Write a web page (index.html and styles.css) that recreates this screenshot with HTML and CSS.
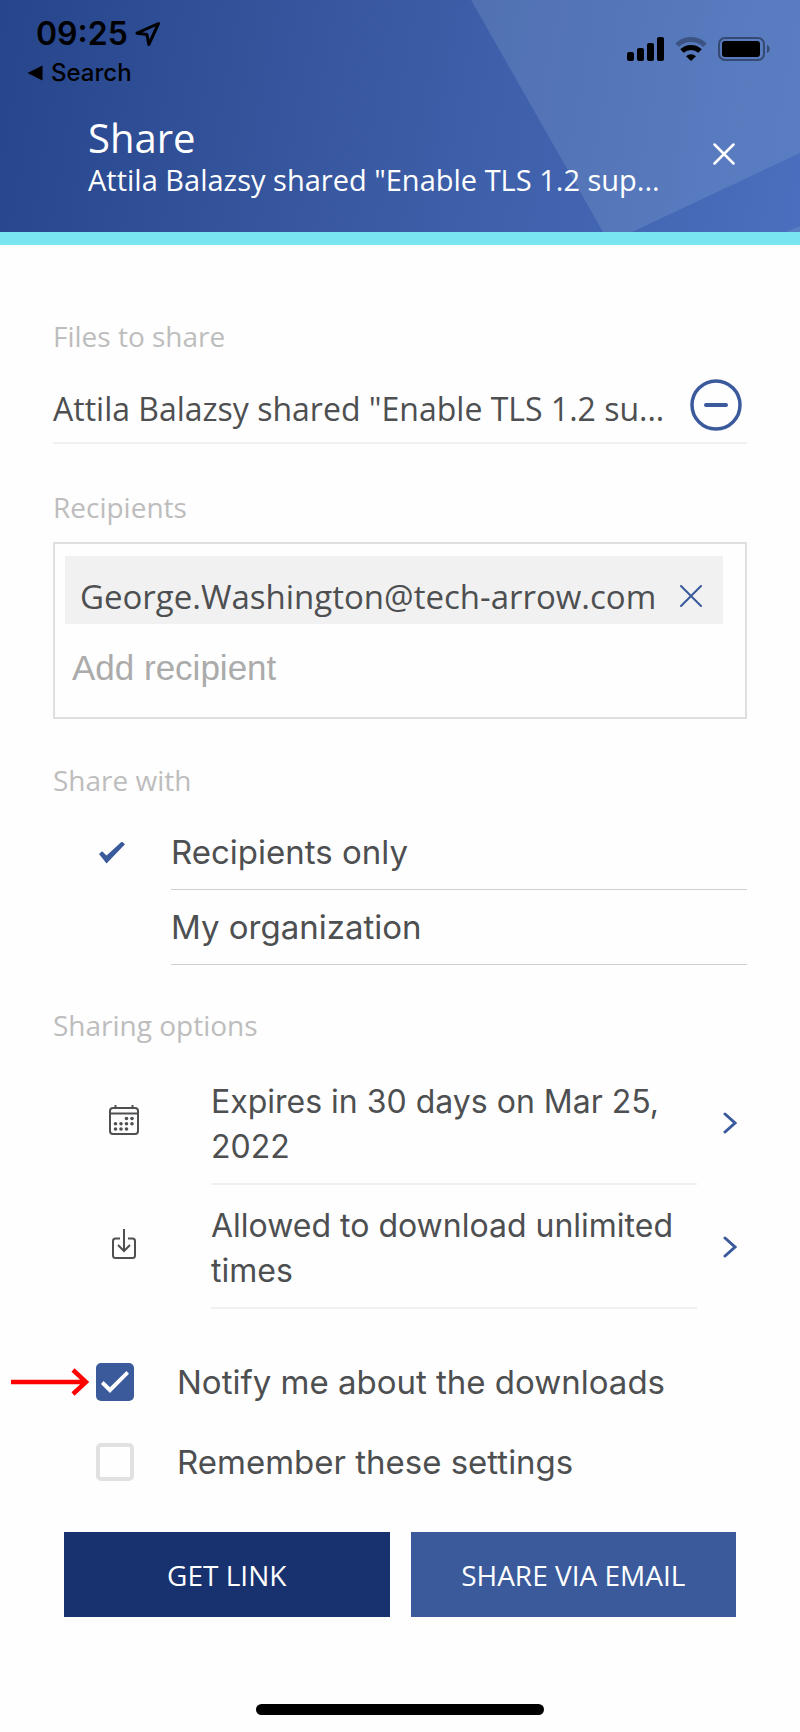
FILE: index.html
```html
<!DOCTYPE html>
<html lang="en">
<head>
  <meta charset="UTF-8">
  <meta name="viewport" content="width=device-width, initial-scale=1">
  <title>Share</title>
  <link rel="stylesheet" href="styles.css">
</head>
<body>
  <header>
    <svg class="header-bg" viewBox="0 0 800 232" preserveAspectRatio="none" aria-hidden="true">
      <path d="M471 0H800V153L632 232H603Z M786 232L800 226V232Z"/>
    </svg>

    <!-- Phone status bar -->
    <div class="status-bar">
      <div class="status-left">
        <div class="time">
          <span>09:25</span>
          <svg width="26" height="26" viewBox="0 0 26 26" aria-hidden="true">
            <path d="M23.5 2.5L2 12.2L12 13.6L13.8 23.5Z" fill="none" stroke="#000" stroke-width="3" stroke-linejoin="round"/>
          </svg>
        </div>
        <a href="#" class="back-link">
          <svg width="16" height="16" viewBox="0 0 16 16" aria-hidden="true"><path d="M0.5 8L15.5 0.5V15.5Z"/></svg>
          Search
        </a>
      </div>
      <div class="status-icons">
        <svg width="37" height="24" viewBox="0 0 37 24" aria-hidden="true">
          <rect x="0" y="15" width="7" height="9" rx="2"/>
          <rect x="10" y="11" width="7" height="13" rx="2"/>
          <rect x="20" y="6" width="7" height="18" rx="2"/>
          <rect x="30" y="0" width="7" height="24" rx="2"/>
        </svg>
        <svg width="32" height="24" viewBox="0 0 32 24" aria-hidden="true">
          <path d="M2 8.2A20 20 0 0 1 30 8.2" fill="none" stroke="#000" stroke-opacity=".3" stroke-width="5"/>
          <path d="M7 14A13 13 0 0 1 25 14" fill="none" stroke="#000" stroke-width="5"/>
          <path d="M11 19.2A7.5 7.5 0 0 1 21 19.2L16 24Z"/>
        </svg>
        <svg width="52" height="24" viewBox="0 0 52 24" aria-hidden="true">
          <rect x="1" y="1" width="45" height="22" rx="6" fill="none" stroke="#000" stroke-opacity=".4" stroke-width="2"/>
          <rect x="4" y="4" width="38" height="16" rx="3"/>
          <path d="M49 8C52.500 9 52.500 15 49 16Z" fill-opacity=".4"/>
        </svg>
      </div>
    </div>

    <div class="title-bar">
      <div class="titles">
        <h1>Share</h1>
        <p>Attila Balazsy shared "Enable TLS 1.2 sup...</p>
      </div>
      <button type="button" class="icon-btn" aria-label="Close">
        <svg width="22" height="22" viewBox="0 0 22 22"><path d="M1.500 1.500L20.500 20.500M20.500 1.500L1.500 20.500" stroke="#fff" stroke-width="2.500" stroke-linecap="round"/></svg>
      </button>
    </div>
  </header>

  <main>
    <h2>Files to share</h2>
    <div class="file-row">
      <span class="file-name">Attila Balazsy shared "Enable TLS 1.2 su...</span>
      <button type="button" class="icon-btn" aria-label="Remove file">
        <svg width="52" height="52" viewBox="0 0 52 52"><circle cx="26" cy="26" r="24" fill="none" stroke="#3a5a9b" stroke-width="3.500"/><path d="M16 26H36" stroke="#3a5a9b" stroke-width="4" stroke-linecap="round"/></svg>
      </button>
    </div>

    <h2><label for="recipient">Recipients</label></h2>
    <div class="recipients">
      <div class="chip">
        <span>George.Washington@tech-arrow.com</span>
        <button type="button" class="icon-btn" aria-label="Remove recipient">
          <svg width="22" height="22" viewBox="0 0 22 22"><path d="M1 1L21 21M21 1L1 21" stroke="#3a5a9b" stroke-width="2" stroke-linecap="round"/></svg>
        </button>
      </div>
      <input type="text" id="recipient" placeholder="Add recipient">
    </div>

    <h2>Share with</h2>
    <div class="choices">
      <label class="choice">
        <input type="radio" name="share-with" checked>
        <span>Recipients only</span>
      </label>
      <label class="choice">
        <input type="radio" name="share-with">
        <span>My organization</span>
      </label>
    </div>

    <h2>Sharing options</h2>
    <div class="options">
      <button type="button" class="option">
        <svg class="option-icon" width="30" height="30" viewBox="0 0 30 30" aria-hidden="true">
          <g fill="none" stroke="#4d4f51" stroke-width="2"><rect x="1" y="3" width="28" height="26" rx="3"/><path d="M1 8.500H29M6.500 0V3M23.500 0V3"/></g>
          <g fill="#4d4f51"><circle cx="17.500" cy="13.500" r="1.800"/><circle cx="23" cy="13.500" r="1.800"/><circle cx="6.500" cy="18.800" r="1.800"/><circle cx="12" cy="18.800" r="1.800"/><circle cx="17.500" cy="18.800" r="1.800"/><circle cx="23" cy="18.800" r="1.800"/><circle cx="6.500" cy="24" r="1.800"/><circle cx="12" cy="24" r="1.800"/><circle cx="17.500" cy="24" r="1.800"/></g>
        </svg>
        <span class="option-text">Expires in 30 days on Mar 25, 2022</span>
        <svg class="chevron" width="14" height="22" viewBox="0 0 14 22" aria-hidden="true"><path d="M2 2L12 11L2 20" fill="none" stroke="#3a5a9b" stroke-width="3" stroke-linecap="round"/></svg>
      </button>
      <button type="button" class="option">
        <svg class="option-icon" width="24" height="30" viewBox="0 0 24 30" aria-hidden="true">
          <path d="M8 9.500H3.500Q1 9.500 1 12V26.500Q1 29 3.500 29H20.500Q23 29 23 26.500V12Q23 9.500 20.500 9.500H16M12 0V21.500M6 16L12 22L18 16" fill="none" stroke="#4d4f51" stroke-width="2"/>
        </svg>
        <span class="option-text">Allowed to download unlimited times</span>
        <svg class="chevron" width="14" height="22" viewBox="0 0 14 22" aria-hidden="true"><path d="M2 2L12 11L2 20" fill="none" stroke="#3a5a9b" stroke-width="3" stroke-linecap="round"/></svg>
      </button>
    </div>

    <div class="checks">
      <label class="check">
        <input type="checkbox" checked>
        <span>Notify me about the downloads</span>
      </label>
      <label class="check">
        <input type="checkbox">
        <span>Remember these settings</span>
      </label>
      <!-- Pointer to the notify checkbox -->
      <svg class="pointer" width="78" height="28" viewBox="0 0 78 28" aria-hidden="true"><path d="M0 14H74M62 2L75 14L62 26" fill="none" stroke="#f00" stroke-width="4.500"/></svg>
    </div>

    <div class="actions">
      <button type="button" class="btn btn-dark">GET LINK</button>
      <button type="button" class="btn">SHARE VIA EMAIL</button>
    </div>
  </main>

  <footer><div class="home-bar"></div></footer>
</body>
</html>
```

FILE: styles.css
```css
*, *::before, *::after {
  margin: 0;
  padding: 0;
  box-sizing: border-box;
}
body {
  font-family: 'Open Sans', sans-serif;
  background: #fefefe;
  color: #4d4f51;
  min-height: 100vh;
  display: flex;
  flex-direction: column;
}
svg {
  display: block;
  flex-shrink: 0;
}
button, input {
  font: inherit;
  color: inherit;
  background: none;
  border: none;
}

/* Header */
header {
  position: relative;
  background: linear-gradient(100deg, #26458b, #3a5aa3 48%, #4b6fbe);
  border-bottom: 13px solid #79e5f1;
  color: #fff;
}
.header-bg {
  position: absolute;
  inset: 0;
  width: 100%;
  height: 100%;
  fill: rgba(140, 170, 210, 0.25);
}
.status-bar {
  position: relative;
  display: flex;
  justify-content: space-between;
  padding: 14px 30px 0 27px;
  color: #000;
  font-family: Inter, sans-serif;
}
.time {
  display: flex;
  align-items: center;
  gap: 7px;
  padding-left: 9px;
  font-size: 32px;
  font-weight: 600;
  line-height: 40px;
}
.back-link {
  display: flex;
  align-items: center;
  gap: 8px;
  color: #000;
  font-size: 24px;
  font-weight: 500;
  line-height: 38px;
  text-decoration: none;
}
.status-icons {
  display: flex;
  gap: 11px;
  padding-top: 23px;
}
.title-bar {
  position: relative;
  display: flex;
  justify-content: space-between;
  padding: 20px 65px 36px 88px;
}
.titles {
  white-space: nowrap;
}
h1 {
  font-size: 40px;
  font-weight: 400;
  line-height: 52px;
}
.titles p {
  font-size: 29px;
  line-height: 32px;
}
.icon-btn {
  cursor: pointer;
}

/* Form */
main {
  padding: 71px 53px 0;
}
h2 {
  color: #bdbdbd;
  font-size: 28px;
  font-weight: 400;
  line-height: 40px;
}
.file-row {
  display: flex;
  align-items: center;
  justify-content: space-between;
  margin-bottom: 43px;
  padding: 23px 5px 11px 0;
  border-bottom: 2px solid #f0f0f0;
  font-size: 32px;
  line-height: 45px;
  white-space: nowrap;
}
.file-name {
  padding-top: 6px;
}
.recipients {
  margin: 15px 0 41px;
  padding: 12px 22px 18px 10px;
  border: 2px solid #dfdfdf;
}
.chip {
  display: flex;
  align-items: center;
  justify-content: space-between;
  height: 68px;
  padding: 12px 21px 0 15px;
  background: #f1f1f1;
  font-size: 33px;
}
.recipients input {
  display: block;
  width: 100%;
  height: 60px;
  margin-top: 14px;
  margin-bottom: 1px;
  padding-left: 7px;
  font-family: 'Liberation Sans', sans-serif;
  font-size: 35px;
  outline: none;
}
.recipients input::placeholder {
  color: #ababab;
  opacity: 1;
}

/* Share with */
.choices {
  margin: 15px 0 40px;
}
.choice {
  display: flex;
  align-items: center;
  font-family: Inter, sans-serif;
  font-size: 33px;
}
.choice input {
  appearance: none;
  width: 26px;
  height: 22px;
  margin: 0 46px;
}
.choice input:checked {
  background: #3a5a9b;
  clip-path: polygon(0 57%, 12% 44%, 29% 64%, 88% 0, 100% 12%, 29% 100%);
}
.choice span {
  flex: 1;
  border-bottom: 1px solid #cfcfcf;
  line-height: 74px;
}

/* Sharing options */
.options {
  margin: 16px 0 33px;
}
.option {
  display: grid;
  grid-template-columns: 158px 1fr 50px;
  align-items: center;
  width: 100%;
  font-family: Inter, sans-serif;
  font-size: 32px;
  line-height: 45px;
  text-align: left;
  cursor: pointer;
}
.option-icon {
  justify-self: center;
  margin: 0 16px 6px 0;
}
.option .chevron {
  justify-self: end;
  margin-right: 10px;
}
.option-text {
  padding: 18px 0 14px;
  border-bottom: 2px solid #f0f0f0;
}

/* Checkboxes */
.checks {
  position: relative;
}
.check {
  display: flex;
  align-items: center;
  gap: 43px;
  height: 80px;
  padding-left: 43px;
  font-family: Inter, sans-serif;
  font-size: 33px;
}
.check input {
  appearance: none;
  position: relative;
  width: 38px;
  height: 38px;
  border: 4px solid #e1e1e1;
  border-radius: 5px;
}
.check input:checked {
  background: #3a5a9b;
  border-color: #3a5a9b;
}
.check input:checked::before {
  content: "";
  position: absolute;
  inset: 4px 1px;
  background: #fff;
  clip-path: polygon(0 59%, 9% 46%, 32% 74%, 91% 0, 100% 12%, 32% 100%);
}
.pointer {
  position: absolute;
  top: 26px;
  left: -42px;
}

/* Buttons */
.actions {
  display: grid;
  grid-template-columns: 1fr 1fr;
  gap: 21px;
  margin: 30px 11px 0;
}
.btn {
  height: 85px;
  background: #3a5a9b;
  color: #fff;
  font-size: 28px;
  cursor: pointer;
}
.btn-dark {
  background: #18326f;
}

footer {
  margin-top: auto;
  padding: 40px 0 17px;
}
.home-bar {
  width: 36%;
  height: 11px;
  margin: 0 auto;
  border-radius: 6px;
  background: #000;
}
```
